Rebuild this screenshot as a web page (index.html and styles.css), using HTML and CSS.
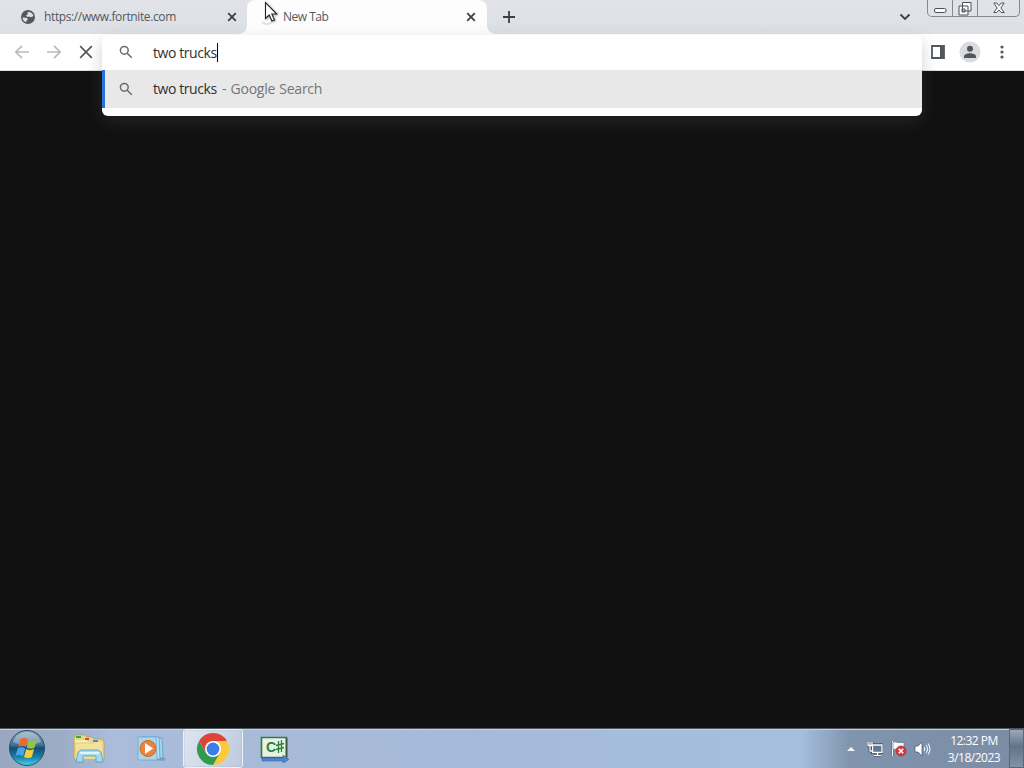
FILE: index.html
```
<!DOCTYPE html>
<html lang="en">
<head>
    <meta charset="UTF-8">
    <meta name="viewport" content="width=device-width, initial-scale=1.0">
    <title>New Tab</title>
    <link rel="stylesheet" href="styles.css">
</head>
<body>
    <div class="desktop">
        <!-- Tabs -->
        <div class="tab-strip">
            <div class="tab">
                <svg class="favicon" width="16" height="16" viewBox="0 0 16 16">
                    <circle cx="8" cy="8" r="7" fill="#54585d"/>
                    <path d="M2.500 8.500l4 .2 1.500 1.500-1.500 1.500-.3 1.500C4 12.500 2.500 10.700 2.500 8.500zM7.500 3c3-.6 5.500 1.300 6 4l-2.500 1.300-2-.8L7.500 8 6 6.500 8 5z" fill="#dee1e6"/>
                </svg>
                <span class="tab-title tab-url">https://www.fortnite.com</span>
                <svg class="close" width="10" height="10" viewBox="0 0 10 10"><path d="M1.200 1.200l7.600 7.600M8.800 1.200L1.200 8.800"/></svg>
            </div>
            <div class="tab active">
                <span class="spinner"></span>
                <span class="tab-title">New Tab</span>
                <svg class="close" width="10" height="10" viewBox="0 0 10 10"><path d="M1.200 1.200l7.600 7.600M8.800 1.200L1.200 8.800"/></svg>
            </div>
            <svg class="new-tab" width="14" height="14" viewBox="0 0 14 14"><path d="M7 1v12M1 7h12"/></svg>
            <svg class="tab-search" width="12" height="8" viewBox="0 0 12 8"><path d="M1.500 1.500L6 6l4.500-4.500"/></svg>
            <div class="window-buttons">
                <span class="win-min"><svg width="13" height="6" viewBox="0 0 13 6"><rect x=".5" y=".5" width="11.500" height="4" rx="1.500"/></svg></span>
                <span class="win-restore"><svg width="14" height="14" viewBox="0 0 14 14"><path d="M4.500.5h8.500v8.500H4.500zM1 4h9v9H1zM4 7h3v3H4z"/></svg></span>
                <span class="win-close"><svg width="12" height="12" viewBox="0 0 12 12"><path d="M.8 1h3L6 3.700 8.200 1h3L7.800 6l3.400 4.500h-3L6 8l-2.200 2.500h-3L4.200 6z"/></svg></span>
            </div>
        </div>

        <!-- Toolbar -->
        <div class="toolbar">
            <svg class="nav disabled" width="16" height="16" viewBox="0 0 16 16"><path d="M15 8H2M8 1.800L1.800 8 8 14.200"/></svg>
            <svg class="nav disabled" width="16" height="16" viewBox="0 0 16 16"><path d="M1 8h13M8 1.800L14.200 8 8 14.200"/></svg>
            <svg class="nav" width="16" height="16" viewBox="0 0 16 16"><path d="M2.200 2.200l11.600 11.600M13.800 2.200L2.200 13.800"/></svg>
            <div class="toolbar-right">
                <svg width="14" height="14" viewBox="0 0 14 14"><path d="M1 1h12v12H1z" fill="#fff" stroke="#54585d" stroke-width="1.800"/><path d="M9 1h4v12H9z" fill="#54585d"/></svg>
                <svg class="avatar" width="22" height="22" viewBox="0 0 22 22"><circle cx="11" cy="11" r="10.500" fill="#dadce0"/><circle cx="11" cy="7.800" r="3" fill="#4f565e"/><path d="M5 17v-1.500c0-2.200 3.500-3.300 6-3.300s6 1.100 6 3.300V17z" fill="#4f565e"/></svg>
                <svg width="4" height="14" viewBox="0 0 4 14" fill="#54585d"><circle cx="2" cy="2" r="1.600"/><circle cx="2" cy="7" r="1.600"/><circle cx="2" cy="12" r="1.600"/></svg>
            </div>
        </div>

        <div class="page"></div>

        <!-- Search box with its suggestions, over the page -->
        <div class="omnibox">
            <div class="omnibox-input">
                <svg class="search" width="14" height="14" viewBox="0 0 14 14"><circle cx="5.300" cy="5.300" r="3.900"/><path d="M8.200 8.200l4.600 4.600"/></svg>
                <span class="query">two trucks</span><span class="caret"></span>
            </div>
            <div class="suggestion">
                <svg class="search" width="14" height="14" viewBox="0 0 14 14"><circle cx="5.300" cy="5.300" r="3.900"/><path d="M8.200 8.200l4.600 4.600"/></svg>
                <span class="query">two trucks</span><span class="engine">- Google Search</span>
            </div>
        </div>

        <!-- Taskbar -->
        <div class="taskbar">
            <svg class="start" width="38" height="38" viewBox="0 0 38 38">
                <defs>
                    <linearGradient id="orb" x1="0" y1="0" x2="0" y2="1">
                        <stop offset="0" stop-color="#8fa9bd"/>
                        <stop offset=".42" stop-color="#456f8f"/>
                        <stop offset=".5" stop-color="#154c78"/>
                        <stop offset=".75" stop-color="#177fa9"/>
                        <stop offset="1" stop-color="#46d3ea"/>
                    </linearGradient>
                </defs>
                <circle cx="19" cy="19" r="17.500" fill="url(#orb)" stroke="#24506f"/>
                <path d="M5 13C8 5 14 3 19 3s11 2 14 10c-8 4-20 4-28 0z" fill="#fff" opacity=".3"/>
                <path d="M12.500 10c2.500-1.500 4.500-1.300 7.500.2l-2.300 7.800c-2.500-1.500-4.800-1.600-7.500-.2z" fill="#ec6a32"/>
                <path d="M21 10.900c2.500 1.500 4.700 1.400 7.800 0l-2.300 7.900c-2.600 1.400-5 1.400-7.800-.1z" fill="#8fc643"/>
                <path d="M9.700 19.200c2.500-1.400 4.800-1.300 7.600.2l-2.300 7.800c-2.500-1.500-4.800-1.600-7.500-.2z" fill="#4aa5e4"/>
                <path d="M18.300 20.100c2.500 1.500 4.900 1.400 7.800 0l-2.300 7.900c-2.600 1.400-5 1.400-7.800-.1z" fill="#fccb3c"/>
            </svg>
            <div class="task">
                <svg width="34" height="30" viewBox="0 0 34 30">
                    <path d="M2 3l2-2h9l2 2h5l2 2h9l1 3v17H2z" fill="#e9d689" stroke="#b9a25c" stroke-width=".8"/>
                    <path d="M3 6h11l2 2h15v17H3z" fill="#f8eba8"/>
                    <path d="M3 9h19l2-2h7v18H3z" fill="#f3e197" stroke="#d9c57c" stroke-width=".7"/>
                    <path d="M4 2h5v2H4z" fill="#39a843"/><path d="M13 4h4v2h-4z" fill="#d54e34"/><path d="M21 6h5v2h-5z" fill="#438dcc"/>
                    <path d="M4 28l2-10 3-2h17l3 2 2 10h-7v-6H11v6z" fill="#a2daf1" stroke="#5799bd" stroke-width=".8"/>
                    <path d="M8 18h19v2H8z" fill="#def5fc"/>
                </svg>
            </div>
            <div class="task">
                <svg width="30" height="28" viewBox="0 0 30 28">
                    <path d="M14 25l14 1 2-2-5-3z" fill="#718bac" opacity=".6"/>
                    <path d="M8 3h18l1 20H8z" fill="#a6d3ed" stroke="#5e9fc7" stroke-width=".8"/>
                    <path d="M5 2h18l1 22H5z" fill="#b5def2" stroke="#5e9fc7" stroke-width=".8"/>
                    <path d="M2 2h18l1 23H2z" fill="#acd5ea" stroke="#6aaad0" stroke-width=".8"/>
                    <circle cx="12" cy="13.500" r="8" fill="#e8853b" stroke="#d5671d"/>
                    <path d="M9 8l8 5.500L9 19z" fill="#fff"/>
                </svg>
            </div>
            <div class="task running">
                <svg width="34" height="34" viewBox="0 0 34 34">
                    <path d="M17 9h13.860A16 16 0 0 1 17 33l6.930-12z" fill="#fdc93c"/>
                    <path d="M3.140 9A16 16 0 0 0 17 33l6.930-12L17 17l-6.930 4z" fill="#309b50"/>
                    <path d="M3.140 9L10.070 21 17 17V9h13.860A16 16 0 0 0 3.140 9z" fill="#db4437"/>
                    <circle cx="17" cy="17" r="8" fill="#fff"/><circle cx="17" cy="17" r="6.400" fill="#397fe5"/>
                </svg>
            </div>
            <div class="task">
                <svg width="30" height="28" viewBox="0 0 30 28">
                    <path d="M1.500 2.500h25v20h-25z" fill="#e7f2e4" stroke="#327d3d" stroke-width="1.600"/>
                    <path d="M26.500 3v19" stroke="#35583c" stroke-width="1.600"/>
                    <text class="csharp" x="6" y="17">C</text>
                    <path d="M18.500 6v12M21.500 5v12M16 10.500l8-2M16 14.500l8-2" stroke="#28823a" stroke-width="1.300"/>
                    <path d="M2 23h21v-3l6 4.500-6 3.500v-2H2z" fill="#5282d0" stroke="#3159a0" stroke-width=".5"/>
                </svg>
            </div>
            <div class="tray">
                <svg width="8" height="4" viewBox="0 0 8 4"><path d="M0 4l4-4 4 4z" fill="#f4f8fc"/></svg>
                <svg class="network" width="16" height="16" viewBox="0 0 16 16">
                    <path d="M5.500 4h9.500v7.500H5.500zM7 14.500h7M10.500 12v2" fill="#64788d" stroke="#293847" stroke-width="3"/>
                    <path d="M1 1v3.500h4V1M3 1v9h3" fill="none" stroke="#293847" stroke-width="2.600"/>
                    <path d="M5.500 4h9.500v7.500H5.500zM7 14.500h7M10.500 12v2" fill="#64788d" stroke="#fff" stroke-width="1.300"/>
                    <path d="M1 1v3.500h4V1M3 1v9h3" fill="none" stroke="#fff" stroke-width="1.300"/>
                </svg>
                <svg class="flag" width="18" height="17" viewBox="0 0 18 17">
                    <path d="M2.500 1v15" stroke="#364b61" stroke-width="3"/><path d="M2.500 1v15" stroke="#fff" stroke-width="1.500"/>
                    <path d="M3 2c3-1 4 1 7 .5h4v7c-4 1-6-1-11 0z" fill="#f7f9fa" stroke="#53677e" stroke-width=".6"/>
                    <circle cx="11" cy="11" r="5" fill="#d93940" stroke="#a61d28" stroke-width=".6"/>
                    <path d="M8.800 8.800l4.400 4.400M13.200 8.800l-4.400 4.400" stroke="#fff" stroke-width="1.600"/>
                </svg>
                <svg class="volume" width="17" height="16" viewBox="0 0 17 16">
                    <path d="M1 5h3l4-4v14l-4-4H1z" fill="#fff" stroke="#4b6077" stroke-width=".8"/>
                    <path d="M10 6q1.500 2 0 4M12 4q3 4 0 8M14 2.500q4 5.500 0 11" fill="none" stroke="#edf5fb" stroke-width="1.100"/>
                </svg>
                <div class="clock"><span class="time">12:32 PM</span><span class="date">3/18/2023</span></div>
                <div class="show-desktop"></div>
            </div>
        </div>

        <svg class="cursor" width="15" height="22" viewBox="0 0 15 22"><path d="M1.500 1.500v16l3.700-3.500 2.700 6 2.600-1.100-2.700-5.900h5z" fill="#fff" stroke="#222" stroke-width="1.100"/></svg>
    </div>
</body>
</html>
```
FILE: styles.css
```
* {
    margin: 0;
    padding: 0;
    box-sizing: border-box;
}

body {
    overflow: hidden;
    font-family: 'Open Sans', 'Noto Sans', sans-serif;
}

svg {
    display: block;
    flex-shrink: 0;
}

.desktop {
    position: relative;
    display: flex;
    flex-direction: column;
    width: 1024px;
    height: 768px;
    background: #111;
}

/* Tabs */
.tab-strip {
    display: flex;
    height: 34px;
    background: linear-gradient(#e1e3e9, #dce0e5);
}

.tab {
    position: relative;
    display: flex;
    align-items: center;
    width: 247px;
    padding: 0 10px 0 20px;
}

.tab-title {
    flex: 1;
    margin-left: 8px;
    font-size: 12px;
    line-height: 16px;
    letter-spacing: -0.5px;
    color: #55585c;
    white-space: nowrap;
}

.tab-url {
    letter-spacing: -0.38px;
}

.tab.active {
    width: 240px;
    padding: 0 11px 0 12px;
    background: #fdfdfe;
    border-radius: 8px 8px 0 0;
}

.tab.active::before,
.tab.active::after {
    content: '';
    position: absolute;
    bottom: 0;
    width: 8px;
    height: 8px;
}

.tab.active::before {
    left: -8px;
    background: radial-gradient(circle at 0 0, transparent 7.5px, #fdfdfe 8px);
}

.tab.active::after {
    right: -8px;
    background: radial-gradient(circle at 100% 0, transparent 7.5px, #fdfdfe 8px);
}

.spinner {
    width: 16px;
    height: 16px;
    border: 2px solid transparent;
    border-bottom-color: #dfe1e5;
    border-radius: 50%;
}

.close,
.new-tab,
.tab-search {
    fill: none;
    stroke: #3c4043;
    stroke-width: 1.8;
}

.new-tab {
    margin: 10px 0 0 15px;
}

.tab-search {
    margin: 13px 16px 0 auto;
}

.window-buttons {
    display: flex;
    width: 93px;
    height: 17px;
    margin-right: 4px;
    border: 1px solid #858a91;
    border-top: 0;
    border-radius: 0 0 5px 5px;
}

.window-buttons span {
    display: flex;
    justify-content: center;
}

.window-buttons svg {
    fill: #fafbfc;
    stroke: #4d5258;
    stroke-width: 1;
}

.win-min {
    width: 25px;
    padding-top: 8px;
    border-right: 1px solid #858a91;
}

.win-restore {
    width: 25px;
    padding-top: 2px;
    border-right: 1px solid #858a91;
}

.win-close {
    width: 41px;
    padding-top: 2px;
}

/* Toolbar */
.toolbar {
    display: flex;
    align-items: center;
    gap: 16px;
    height: 37px;
    padding: 0 20px 0 14px;
    background: #fff;
    border-bottom: 1px solid #d9dbde;
}

.nav {
    fill: none;
    stroke: #54585d;
    stroke-width: 1.7;
}

.nav.disabled {
    stroke: #b9bbbe;
}

.toolbar-right {
    display: flex;
    align-items: center;
    gap: 14px;
    margin-left: auto;
}

.avatar {
    margin-right: 5px;
}

.page {
    flex: 1;
}

/* Search box */
.omnibox {
    position: absolute;
    top: 35px;
    left: 102px;
    width: 820px;
    height: 81px;
    background: #fff;
    border-radius: 6px;
    box-shadow: 0 6px 16px rgba(80, 90, 85, 0.28);
    overflow: hidden;
    font-size: 14px;
}

.omnibox-input,
.suggestion {
    display: flex;
    align-items: center;
    padding-bottom: 1px;
    color: #2f3032;
    white-space: nowrap;
}

.omnibox-input {
    height: 35px;
    padding-left: 17px;
}

.suggestion {
    height: 38px;
    padding-left: 14px;
    background: #e8e8e8;
    border-left: 3px solid #2a72d8;
}

.search {
    margin-right: 20px;
    fill: none;
    stroke: #686b70;
    stroke-width: 1.5;
}

.query {
    width: 64px;
    letter-spacing: -0.42px;
}

.caret {
    width: 1px;
    height: 19px;
    background: #000;
}

.engine {
    margin-left: 5px;
    color: #737578;
    letter-spacing: -0.27px;
    word-spacing: 1px;
}

/* Taskbar */
.taskbar {
    display: flex;
    height: 40px;
    background: linear-gradient(90deg, #99a8c0 0, #9dacc5 60px, #a9bcda 110px, #a5bad8 480px, #a6bfdd 800px, #8094ae 850px, #7c8ca4 1024px);
    border-top: 1px solid #4e5763;
    box-shadow: inset 0 1px #c4cfdf;
}

.start {
    margin: 0 13px 0 8px;
}

.task {
    display: flex;
    align-items: center;
    justify-content: center;
    width: 60px;
    margin-right: 2px;
}

.running {
    background: linear-gradient(110deg, #dfe5ee, #bdcade);
    border: 1px solid #edf2f8;
    border-radius: 3px;
    box-shadow: inset 0 0 1px #687c98;
}

.csharp {
    font: bold 14px 'Liberation Sans', sans-serif;
    fill: #28823a;
}

.tray {
    display: flex;
    align-items: center;
    margin-left: auto;
}

.network {
    margin-left: 12px;
}

.flag {
    margin-left: 7px;
}

.volume {
    margin-left: 6px;
}

.clock {
    display: flex;
    flex-direction: column;
    align-items: center;
    width: 64px;
    margin-left: 11px;
    font-size: 12px;
    line-height: 17px;
    color: #fff;
    white-space: nowrap;
}

.time,
.date {
    letter-spacing: -0.5px;
}

.show-desktop {
    width: 15px;
    height: 39px;
    margin-left: 3px;
    background: linear-gradient(#9aa8b9, #61738a 45%, #8392a5);
    border: 1px solid #b0bac8;
    outline: 1px solid #59677a;
    outline-offset: -1px;
}

.cursor {
    position: absolute;
    top: 1px;
    left: 264px;
    filter: drop-shadow(1px 1px 1px rgba(0, 0, 0, 0.3));
}
```
